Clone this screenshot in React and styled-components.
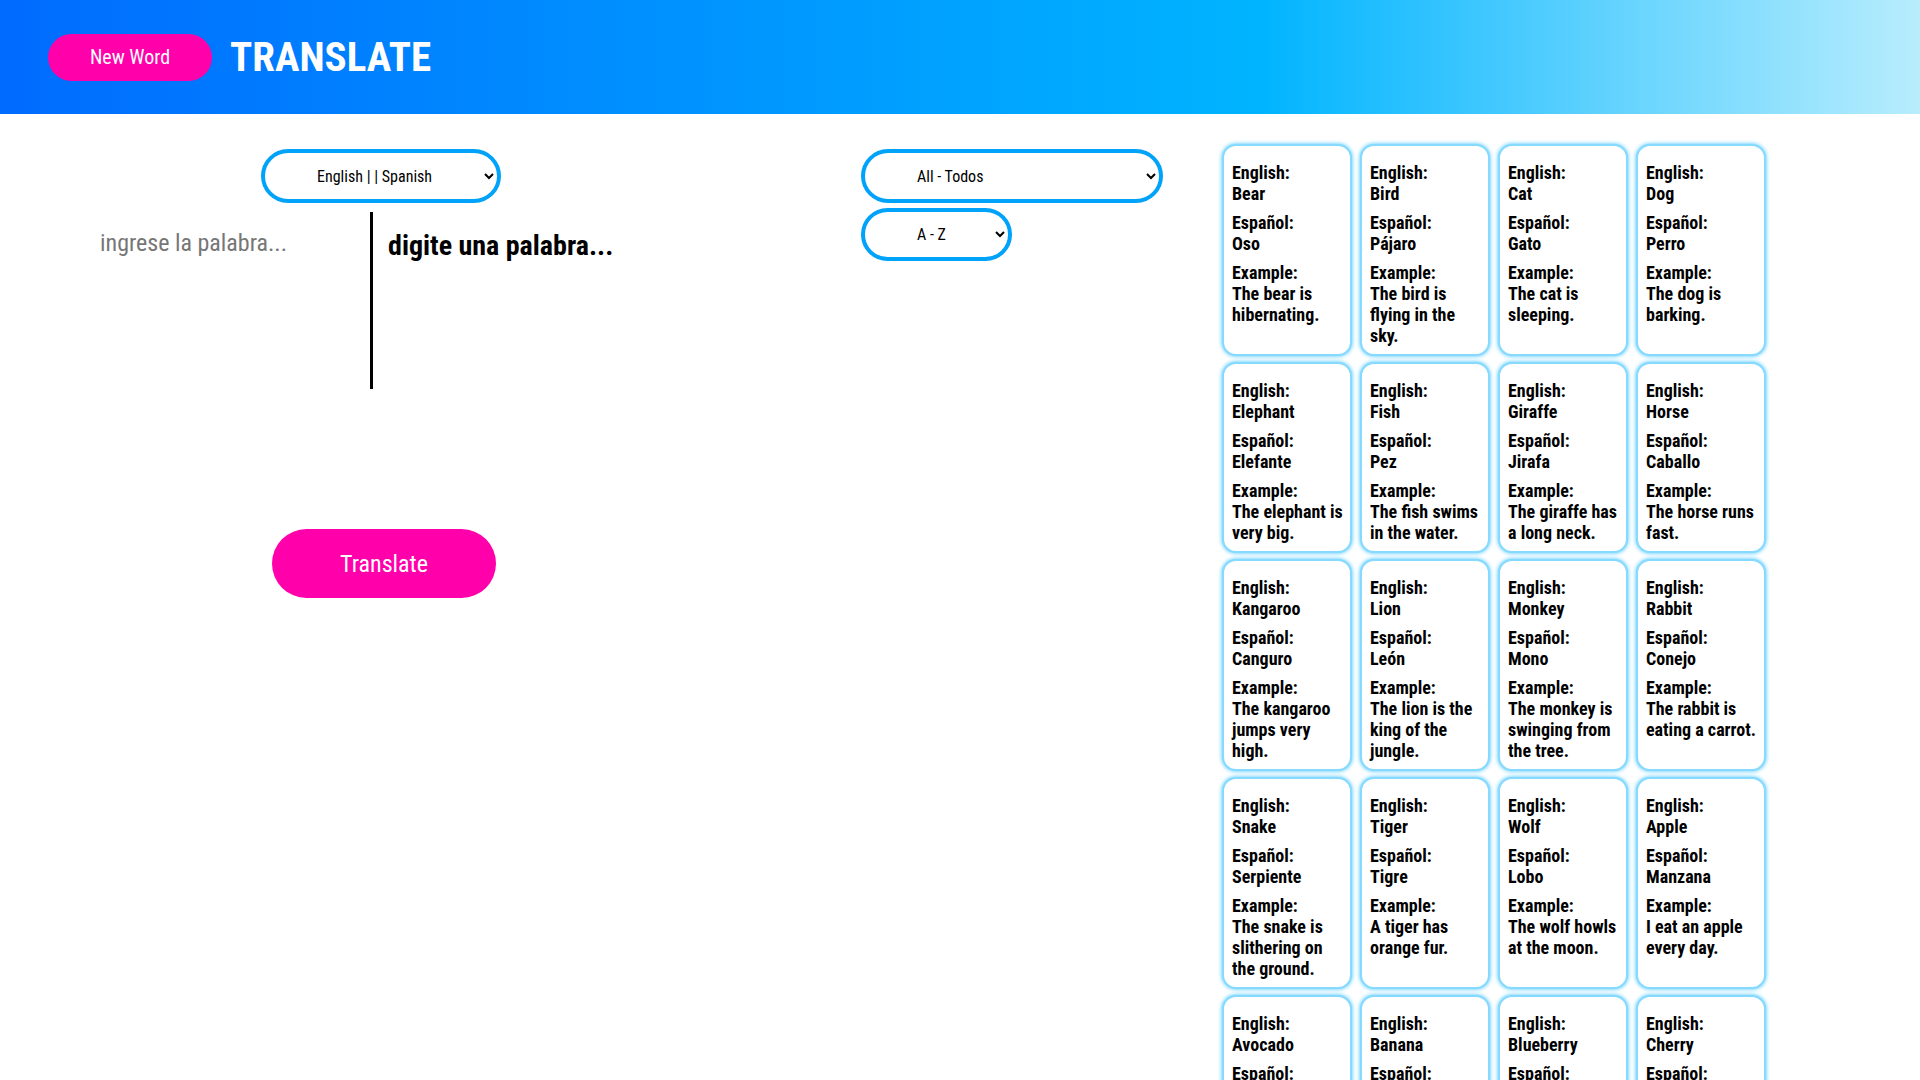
import React, { useState } from "react";
import styled, { createGlobalStyle } from "styled-components";

const FONT = `"Roboto Condensed", "Liberation Sans Narrow", "DejaVu Sans Condensed", Roboto, sans-serif`;

const Global = createGlobalStyle`
  html, body { margin: 0; padding: 0; background: #fff; }
  body { font-family: ${FONT}; color: #000; overflow-y: scroll; }
  * { box-sizing: border-box; }
`;

const Header = styled.header`
  height: 114px;
  display: flex;
  align-items: center;
  gap: 18px;
  padding-left: 48px;
  background: linear-gradient(90deg, #006bff 0%, #00b4ff 65.6%, #b8edfd 100%);
`;

const PillButton = styled.button`
  font-family: ${FONT};
  border: none;
  border-radius: 999px;
  background: #ff00aa;
  color: #fff;
  cursor: pointer;
  width: ${(p) => p.$w}px;
  height: ${(p) => p.$h}px;
  font-size: ${(p) => p.$fs}px;
`;

const Title = styled.h1`
  margin: 0;
  color: #fff;
  font-size: 41px;
  font-weight: 700;
`;

const Main = styled.main`
  display: flex;
  align-items: flex-start;
`;

const Left = styled.section`
  width: 762px;
  padding-top: 35px;
  display: flex;
  flex-direction: column;
  align-items: center;
`;

const Middle = styled.section`
  width: 460px;
  padding: 35px 0 0 99px;
  display: flex;
  flex-direction: column;
  align-items: flex-start;
  gap: 5px;
`;

const Select = styled.select`
  font-family: ${FONT};
  font-size: 16px;
  color: #000;
  background: #fff;
  border: 4px solid #00a2fa;
  border-radius: 999px;
  padding: 0 12px 0 48px;
  width: ${(p) => p.$w}px;
  height: ${(p) => p.$h}px;
  outline: none;
`;

const Row = styled.div`
  align-self: stretch;
  display: flex;
  align-items: flex-start;
  padding-left: 90px;
  margin-top: 9px;
`;

const Input = styled.textarea`
  font-family: ${FONT};
  font-size: 24px;
  width: 280px;
  height: 120px;
  border: none;
  outline: none;
  resize: none;
  padding: 17px 10px;
  color: #333;
  &::placeholder { color: #767676; }
`;

const Divider = styled.div`
  width: 3px;
  height: 177px;
  background: #000;
`;

const Output = styled.p`
  margin: 17px 0 0 15px;
  font-size: 28px;
  font-weight: 700;
`;

const TranslateWrap = styled.div`
  margin-top: 140px;
  padding-left: 6px;
`;

const Grid = styled.section`
  padding-top: 30px;
  padding-bottom: 40px;
  display: grid;
  grid-template-columns: repeat(4, 130px);
  column-gap: 8px;
  row-gap: 6px;
`;

const Card = styled.article`
  border: 2px solid #86d9ff;
  box-shadow: 0 0 4px #3fc3ff;
  border-radius: 14px;
  padding: 8px 4px 0 8px;
  background: #fff;
`;

const Field = styled.p`
  margin: 8px 0;
  font-size: 18px;
  font-weight: 700;
  line-height: normal;
`;

const words = [
  ["Bear", "Oso", "The bear is hibernating."],
  ["Bird", "Pájaro", "The bird is flying in the sky."],
  ["Cat", "Gato", "The cat is sleeping."],
  ["Dog", "Perro", "The dog is barking."],
  ["Elephant", "Elefante", "The elephant is very big."],
  ["Fish", "Pez", "The fish swims in the water."],
  ["Giraffe", "Jirafa", "The giraffe has a long neck."],
  ["Horse", "Caballo", "The horse runs fast."],
  ["Kangaroo", "Canguro", "The kangaroo jumps very high."],
  ["Lion", "León", "The lion is the king of the jungle."],
  ["Monkey", "Mono", "The monkey is swinging from the tree."],
  ["Rabbit", "Conejo", "The rabbit is eating a carrot."],
  ["Snake", "Serpiente", "The snake is slithering on the ground."],
  ["Tiger", "Tigre", "A tiger has orange fur."],
  ["Wolf", "Lobo", "The wolf howls at the moon."],
  ["Apple", "Manzana", "I eat an apple every day."],
  ["Avocado", "Aguacate", "The avocado is ripe."],
  ["Banana", "Plátano", "Monkeys love bananas."],
  ["Blueberry", "Arándano", "I put blueberries in my cereal."],
  ["Cherry", "Cereza", "The cherry is red and sweet."],
  ["Coconut", "Coco", "The coconut fell from the palm."],
  ["Grape", "Uva", "These grapes are green."],
  ["Lemon", "Limón", "The lemon is very sour."],
  ["Mango", "Mango", "The mango is juicy."],
  ["Orange", "Naranja", "I drink orange juice."],
  ["Peach", "Durazno", "The peach is soft."],
  ["Pear", "Pera", "She is eating a pear."],
  ["Pineapple", "Piña", "The pineapple is tropical."],
  ["Strawberry", "Fresa", "I like strawberry ice cream."],
  ["Watermelon", "Sandía", "Watermelon is perfect in summer."],
  ["Black", "Negro", "The night sky is black."],
  ["Blue", "Azul", "The sea is blue."],
  ["Brown", "Marrón", "The table is brown."],
  ["Green", "Verde", "The grass is green."],
  ["Pink", "Rosado", "She has a pink dress."],
  ["Purple", "Morado", "The grapes are purple."],
  ["Red", "Rojo", "The apple is red."],
  ["White", "Blanco", "The snow is white."],
  ["Yellow", "Amarillo", "The sun is yellow."],
  ["Gray", "Gris", "The clouds are gray."],
  ["Arm", "Brazo", "He broke his arm."],
  ["Ear", "Oreja", "I hear with my ears."],
  ["Eye", "Ojo", "She has blue eyes."],
  ["Foot", "Pie", "My foot hurts."],
  ["Hand", "Mano", "Raise your hand."],
  ["Head", "Cabeza", "I have a headache."],
  ["Leg", "Pierna", "The table has four legs."],
  ["Mouth", "Boca", "Open your mouth."],
  ["Nose", "Nariz", "The dog has a wet nose."],
  ["Teeth", "Dientes", "Brush your teeth every night."],
  ["Bed", "Cama", "I sleep in my bed."],
  ["Book", "Libro", "I am reading a book."],
  ["Chair", "Silla", "Sit on the chair."],
  ["Cup", "Taza", "The cup is full of coffee."],
  ["Door", "Puerta", "Please close the door."],
  ["Key", "Llave", "I lost my key."],
  ["Lamp", "Lámpara", "Turn on the lamp."],
  ["Table", "Mesa", "The food is on the table."],
  ["Window", "Ventana", "Open the window, please."],
  ["Clock", "Reloj", "The clock is on the wall."],
  ["Bread", "Pan", "I buy fresh bread."],
  ["Cheese", "Queso", "The mouse likes cheese."],
  ["Egg", "Huevo", "I had an egg for breakfast."],
  ["Milk", "Leche", "The milk is cold."],
  ["Rice", "Arroz", "We eat rice with beans."],
  ["Soup", "Sopa", "The soup is hot."],
  ["Water", "Agua", "Drink a lot of water."],
  ["Salt", "Sal", "Pass me the salt."],
  ["Sugar", "Azúcar", "I don't take sugar."],
  ["Meat", "Carne", "The meat is well cooked."],
  ["Brother", "Hermano", "My brother is tall."],
  ["Father", "Padre", "My father works a lot."],
  ["Mother", "Madre", "My mother cooks dinner."],
  ["Sister", "Hermana", "My sister plays the piano."],
  ["Friend", "Amigo", "He is my best friend."],
  ["Teacher", "Maestro", "The teacher is kind."],
];

export default function App() {
  const [text, setText] = useState("");
  return (
    <>
      <Global />
      <Header>
        <PillButton $w={164} $h={47} $fs={20}>New Word</PillButton>
        <Title>TRANSLATE</Title>
      </Header>
      <Main>
        <Left>
          <Select $w={240} $h={54} defaultValue="en-es">
            <option value="en-es">English | | Spanish</option>
            <option value="es-en">Spanish | | English</option>
          </Select>
          <Row>
            <Input
              placeholder="ingrese la palabra..."
              value={text}
              onChange={(e) => setText(e.target.value)}
            />
            <Divider />
            <Output>digite una palabra...</Output>
          </Row>
          <TranslateWrap>
            <PillButton $w={224} $h={69} $fs={24}>Translate</PillButton>
          </TranslateWrap>
        </Left>
        <Middle>
          <Select $w={302} $h={54} defaultValue="all">
            <option value="all">All - Todos</option>
            <option value="animals">Animals - Animales</option>
            <option value="fruits">Fruits - Frutas</option>
          </Select>
          <Select $w={151} $h={53} defaultValue="az">
            <option value="az">A - Z</option>
            <option value="za">Z - A</option>
          </Select>
        </Middle>
        <Grid>
          {words.map(([en, es, ex]) => (
            <Card key={en}>
              <Field>English:<br />{en}</Field>
              <Field>Español:<br />{es}</Field>
              <Field>Example:<br />{ex}</Field>
            </Card>
          ))}
        </Grid>
      </Main>
    </>
  );
}
